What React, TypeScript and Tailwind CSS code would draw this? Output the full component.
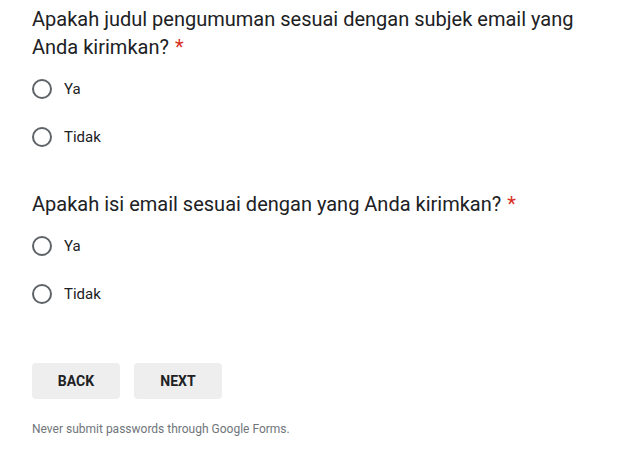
import React from "react";

function Radio({ label }: { label: string }) {
  return (
    <div className="flex items-center h-[48px]">
      <div className="w-[20px] h-[20px] rounded-full border-2 border-[#5f6368] ml-[32px]" />
      <span className="ml-[12px] text-[15px] text-[#202124]">{label}</span>
    </div>
  );
}

export default function App() {
  return (
    <div className="w-[636px] h-[453px] bg-white overflow-hidden" style={{ fontFamily: "Roboto, 'Liberation Sans', sans-serif" }}>
      <div className="pl-[32px] pr-[40px] pt-[5px] text-[20px] leading-[28px] text-[#202124]">
        Apakah judul pengumuman sesuai dengan subjek email yang Anda kirimkan?<span className="ml-[6px] text-[#d93025]">*</span>
      </div>
      <div className="mt-[4px]">
        <Radio label="Ya" />
        <Radio label="Tidak" />
      </div>
      <div className="pl-[32px] pt-[29px] text-[20px] leading-[28px] text-[#202124]">
        Apakah isi email sesuai dengan yang Anda kirimkan?<span className="ml-[6px] text-[#d93025]">*</span>
      </div>
      <div className="mt-[4px]">
        <Radio label="Ya" />
        <Radio label="Tidak" />
      </div>
      <div className="flex gap-[14px] pl-[32px] mt-[45px]">
        <button className="w-[88px] h-[36px] rounded-[4px] bg-[#eeeeee] text-[14px] font-bold text-[#202124]">BACK</button>
        <button className="w-[88px] h-[36px] rounded-[4px] bg-[#eeeeee] text-[14px] font-bold text-[#202124]">NEXT</button>
      </div>
      <div className="pl-[32px] mt-[21px] text-[12px] text-[#70757a]">Never submit passwords through Google Forms.</div>
    </div>
  );
}
